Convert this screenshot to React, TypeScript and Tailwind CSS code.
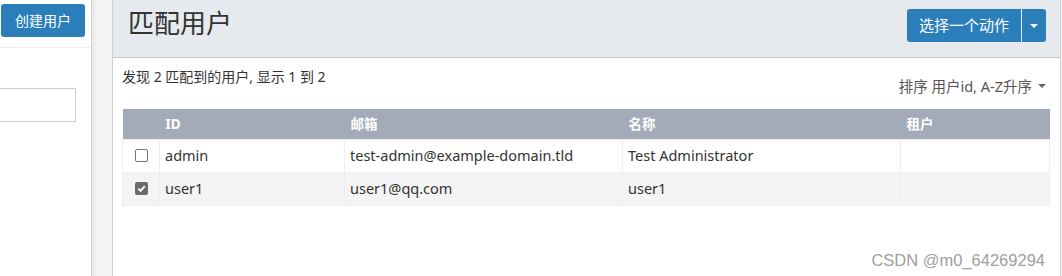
import React from 'react';

interface UserRow {
  id: string;
  email: string;
  name: string;
  tenant: string;
  checked: boolean;
}

const rows: UserRow[] = [
  { id: 'admin', email: 'test-admin@example-domain.tld', name: 'Test Administrator', tenant: '', checked: false },
  { id: 'user1', email: 'user1@qq.com', name: 'user1', tenant: '', checked: true },
];

const font = { fontFamily: '"Noto Sans", "Noto Sans CJK SC", sans-serif' };

const Checkbox = ({ checked }: { checked: boolean }) =>
  checked ? (
    <span className="flex h-[13px] w-[13px] items-center justify-center rounded-[2px] bg-[#6b6b6b]">
      <svg width="9" height="9" viewBox="0 0 10 10">
        <path d="M1.5 5.2 L4 7.6 L8.6 2.4" fill="none" stroke="#fff" strokeWidth="2" />
      </svg>
    </span>
  ) : (
    <span className="block h-[13px] w-[13px] rounded-[2px] border border-[#767676] bg-white" />
  );

const App = () => {
  return (
    <div className="flex h-[276px] w-[1062px] overflow-hidden bg-[#f4f4f4] text-[#333]" style={font}>
      {/* left sidebar */}
      <div className="flex w-[92px] shrink-0 flex-col border-r border-[#d2d2d2] bg-white">
        <div className="flex h-[48px] items-start border-b border-[#eeeeee] pl-[1px] pt-[4px]">
          <button className="h-[33px] w-[84px] rounded-[3px] bg-[#2a7fbb] text-[14px] text-white">创建用户</button>
        </div>
        <div className="pt-[40px]">
          <div className="h-[34px] w-[76px] border-y border-r border-[#cccccc] bg-white" />
        </div>
      </div>

      {/* gutter */}
      <div className="w-[20px] shrink-0 bg-gradient-to-r from-[#e8e8e8] to-[#f5f5f5] to-30%" />

      {/* main panel */}
      <div className="flex w-[949px] shrink-0 flex-col border-x border-[#cfcfcf] bg-white">
        <div className="flex h-[58px] shrink-0 items-start justify-between border-b border-[#c3c7cd] bg-[#e6eaef] pl-[15px] pr-[14px]">
          <h1 className="pt-[5px] text-[26px] leading-[36px] text-[#333]">匹配用户</h1>
          <div className="mt-[9px] flex h-[33px] overflow-hidden rounded-[3px] bg-[#2a7fbb] text-white">
            <span className="flex items-center px-[12px] text-[15px]">选择一个动作</span>
            <span className="w-px bg-[#e6eef5]" />
            <span className="flex w-[24px] items-center justify-center">
              <svg width="8" height="4" viewBox="0 0 8 4">
                <path d="M0 0 L8 0 L4 4 Z" fill="#fff" />
              </svg>
            </span>
          </div>
        </div>

        <div className="flex flex-col pl-[9px] pr-[9px]">
          <div className="flex h-[51px] items-start justify-between">
            <p className="pt-[9px] text-[14px] leading-[20px]">发现 2 匹配到的用户, 显示 1 到 2</p>
            <p className="flex items-center gap-[6px] pr-[5px] pt-[18px] text-[14.5px] leading-[20px] text-[#555]">
              排序 用户id, A-Z升序
              <svg width="8" height="4" viewBox="0 0 8 4">
                <path d="M0 0 L8 0 L4 4 Z" fill="#666" />
              </svg>
            </p>
          </div>

          <table className="w-[928px] border-collapse text-[14.5px]">
            <thead>
              <tr className="h-[30px] bg-[#a4abb8] text-left text-[13.5px] font-bold text-white">
                <th className="w-[37px]" />
                <th className="w-[185px] px-[6px]">ID</th>
                <th className="w-[278px] px-[6px]">邮箱</th>
                <th className="w-[278px] px-[6px]">名称</th>
                <th className="px-[6px]">租户</th>
              </tr>
            </thead>
            <tbody>
              {rows.map((r, i) => (
                <tr key={r.id} className={i % 2 ? 'h-[33px] bg-[#f4f4f4]' : 'h-[33px] bg-white'}>
                  <td className="border border-[#eeeeee] pl-[12px]">
                    <Checkbox checked={r.checked} />
                  </td>
                  <td className="border border-[#eeeeee] px-[5px]">{r.id}</td>
                  <td className="border border-[#eeeeee] px-[5px]">{r.email}</td>
                  <td className="border border-[#eeeeee] px-[5px]">{r.name}</td>
                  <td className="border border-[#eeeeee] px-[5px]">{r.tenant}</td>
                </tr>
              ))}
            </tbody>
          </table>

          <div className="flex justify-end pr-[6px] pt-[42px]">
            <span className="text-[16.5px] text-[#a0a0a0]" style={{ fontFamily: '"Liberation Sans", sans-serif' }}>
              CSDN @m0_64269294
            </span>
          </div>
        </div>
      </div>
    </div>
  );
};

export default App;
